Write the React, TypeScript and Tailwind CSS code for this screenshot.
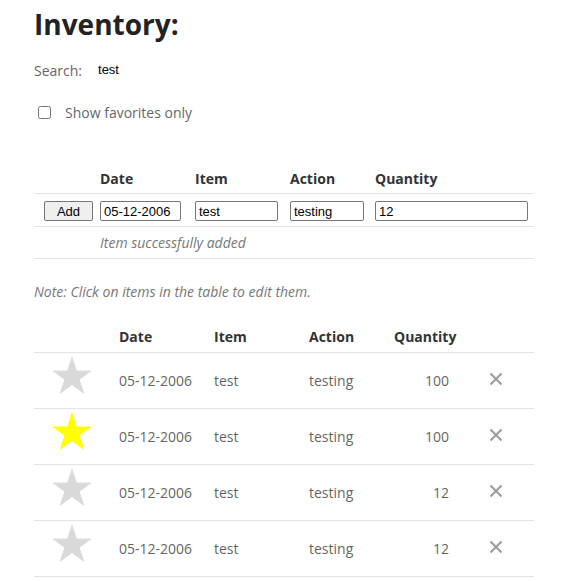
import React from "react";

type Row = {
  fav: boolean;
  date: string;
  item: string;
  action: string;
  quantity: number;
};

const rows: Row[] = [
  { fav: false, date: "05-12-2006", item: "test", action: "testing", quantity: 100 },
  { fav: true, date: "05-12-2006", item: "test", action: "testing", quantity: 100 },
  { fav: false, date: "05-12-2006", item: "test", action: "testing", quantity: 12 },
  { fav: false, date: "05-12-2006", item: "test", action: "testing", quantity: 12 },
];

function Star({ fav }: { fav: boolean }) {
  return (
    <svg width="40" height="38" viewBox="0 0 40 38">
      <polygon
        points="20,0 24.7,14.5 40,14.5 27.6,23.5 32.4,38 20,29 7.6,38 12.4,23.5 0,14.5 15.3,14.5"
        fill={fav ? "#ffff00" : "#d9d9d9"}
      />
    </svg>
  );
}

function Cross() {
  return (
    <svg width="14" height="14" viewBox="0 0 14 14">
      <path d="M1.5 1.5 L12.5 12.5 M12.5 1.5 L1.5 12.5" stroke="#9a9a9a" strokeWidth="2" />
    </svg>
  );
}

const inputCls =
  "h-[20px] rounded-[2px] border border-[#767676] px-[3px] text-[13px] text-black outline-none font-['Liberation_Sans',Arial,sans-serif]";

export default function App() {
  return (
    <div className="min-h-screen bg-white px-[34px] pt-[4px] text-[14px] text-[#666] font-['Open_Sans',sans-serif]">
      <h1 className="text-[28px] font-bold leading-[40px] text-[#222]">Inventory:</h1>

      <div className="mt-[16px] flex h-[20px] items-center">
        <span>Search:</span>
        <input
          defaultValue="test"
          className="ml-[16px] w-[120px] border-0 bg-transparent text-[13px] text-black outline-none font-['Liberation_Sans',Arial,sans-serif]"
        />
      </div>

      <label className="mt-[22px] flex h-[20px] items-center">
        <input type="checkbox" className="ml-[4px] h-[13px] w-[13px]" />
        <span className="ml-[14px]">Show favorites only</span>
      </label>

      {/* add form */}
      <div className="mt-[42px] w-[500px]">
        <div className="grid h-[30px] grid-cols-[66px_95px_95px_85px_159px] items-center border-b border-[#e4e4e4] font-bold text-[#333]">
          <span />
          <span>Date</span>
          <span>Item</span>
          <span>Action</span>
          <span>Quantity</span>
        </div>
        <div className="grid h-[33px] grid-cols-[66px_95px_95px_85px_159px] items-center border-b border-[#e4e4e4] pt-[1px]">
          <div className="pl-[10px]">
            <button className="h-[20px] w-[49px] rounded-[2px] border border-[#767676] bg-[#efefef] text-[13px] text-black font-['Liberation_Sans',Arial,sans-serif]">
              Add
            </button>
          </div>
          <div>
            <input defaultValue="05-12-2006" className={`${inputCls} w-[81px]`} />
          </div>
          <div>
            <input defaultValue="test" className={`${inputCls} w-[83px]`} />
          </div>
          <div>
            <input defaultValue="testing" className={`${inputCls} w-[74px]`} />
          </div>
          <div>
            <input defaultValue="12" className={`${inputCls} w-[153px]`} />
          </div>
        </div>
        <div className="flex h-[32px] items-center border-b border-[#e4e4e4] pl-[66px] italic text-[#777]">
          Item successfully added
        </div>
      </div>

      <p className="mt-[22px] italic text-[#777]">Note: Click on items in the table to edit them.</p>

      {/* inventory table */}
      <div className="mt-[19px] w-[500px]">
        <div className="grid h-[32px] grid-cols-[85px_95px_95px_85px_63px_77px] items-center border-b border-[#e4e4e4] font-bold text-[#333]">
          <span />
          <span>Date</span>
          <span>Item</span>
          <span>Action</span>
          <span>Quantity</span>
          <span />
        </div>
        {rows.map((r, i) => (
          <div
            key={i}
            className="grid h-[56px] grid-cols-[85px_95px_95px_85px_63px_77px] items-center border-b border-[#e4e4e4]"
          >
            <div className="flex justify-center pb-[12px] pr-[9px]">
              <Star fav={r.fav} />
            </div>
            <span>{r.date}</span>
            <span>{r.item}</span>
            <span>{r.action}</span>
            <span className="pr-[8px] text-right">{r.quantity}</span>
            <div className="pb-[4px] pl-[32px]">
              <Cross />
            </div>
          </div>
        ))}
      </div>
    </div>
  );
}
